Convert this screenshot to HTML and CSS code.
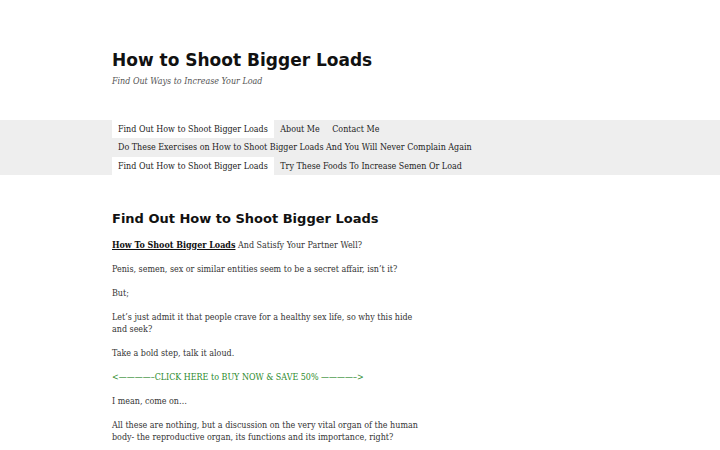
FILE: index.html
```html
<!DOCTYPE html>
<html>
<head>
<meta charset="utf-8">
<title>How to Shoot Bigger Loads</title>
<link rel="stylesheet" href="styles.css">
</head>
<body>
<header class="site-header">
  <div class="wrap">
    <h1 class="site-title">How to Shoot Bigger Loads</h1>
    <p class="site-desc">Find Out Ways to Increase Your Load</p>
  </div>
</header>
<nav class="menu-bar">
  <div class="wrap">
    <ul class="menu">
      <li class="current"><a href="#">Find Out How to Shoot Bigger Loads</a></li>
      <li><a href="#">About Me</a></li>
      <li><a href="#">Contact Me</a></li>
      <li><a href="#">Do These Exercises on How to Shoot Bigger Loads And You Will Never Complain Again</a></li>
      <li class="current"><a href="#">Find Out How to Shoot Bigger Loads</a></li>
      <li><a href="#">Try These Foods To Increase Semen Or Load</a></li>
    </ul>
  </div>
</nav>
<main class="wrap">
  <article class="entry">
    <h2 class="entry-title">Find Out How to Shoot Bigger Loads</h2>
    <p><a class="strong-link" href="#">How To Shoot Bigger Loads</a> And Satisfy Your Partner Well?</p>
    <p>Penis, semen, sex or similar entities seem to be a secret affair, isn’t it?</p>
    <p>But;</p>
    <p>Let’s just admit it that people crave for a healthy sex life, so why this hide and seek?</p>
    <p>Take a bold step, talk it aloud.</p>
    <p><a class="cta" href="#">&lt;————–CLICK HERE to BUY NOW &amp; SAVE 50% ————–&gt;</a></p>
    <p>I mean, come on…</p>
    <p>All these are nothing, but a discussion on the very vital organ of the human body- the reproductive organ, its functions and its importance, right?</p>
  </article>
</main>
</body>
</html>
```
FILE: styles.css
```css
html, body {
  margin: 0;
  padding: 0;
  background: #fff;
}
body {
  font-family: "DejaVu Serif Condensed", "DejaVu Serif", serif;
  font-stretch: semi-condensed;
  font-size: 8.9px;
  line-height: 12px;
  color: #333;
}
.wrap {
  width: 496px;
  margin: 0 auto;
}
.site-header {
  padding: 49px 0 33px;
}
.site-title {
  margin: 0;
  font-family: "DejaVu Sans", sans-serif;
  font-stretch: normal;
  font-weight: bold;
  font-size: 17px;
  line-height: 22px;
  color: #111;
}
.site-desc {
  margin: 4px 0 0;
  font-style: italic;
  color: #555;
}
.menu-bar {
  background: #eee;
}
.menu {
  list-style: none;
  margin: 0;
  padding: 0;
  display: flex;
  flex-wrap: wrap;
}
.menu li a {
  display: block;
  padding: 3px 6.5px 3px 6px;
  line-height: 12.3px;
  color: #222;
  text-decoration: none;
}
.menu li.current a {
  background: #fff;
}
.entry {
  width: 312px;
  padding-top: 35px;
}
.entry-title {
  margin: 0 0 11px;
  font-family: "DejaVu Sans", sans-serif;
  font-stretch: normal;
  font-weight: bold;
  font-size: 13px;
  line-height: 18px;
  color: #111;
}
.entry p {
  margin: 0 0 12px;
}
.strong-link {
  color: #111;
  font-weight: bold;
  text-decoration: underline;
}
.cta {
  color: #2b8a2b;
  text-decoration: none;
}
```
